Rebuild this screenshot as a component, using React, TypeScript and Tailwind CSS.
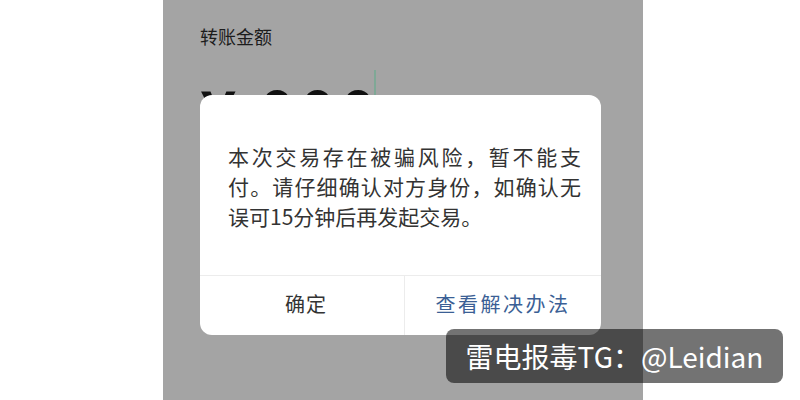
import React from 'react'

const cjk = { fontFamily: '"Noto Sans CJK SC", "Noto Sans", sans-serif' }

function RiskDialog() {
  return (
    <div className="absolute left-[37px] top-[95px] w-[401px] h-[240px] rounded-[12px] bg-white flex flex-col overflow-hidden">
      {/* Message */}
      <div className="flex-1 pl-[28px] pt-[46px]">
        <p className="w-[353px] text-justify text-[21px] leading-[30px] text-[#333333]">
          本次交易存在被骗风险，暂不能支付。请仔细确认对方身份，如确认无误可15分钟后再发起交易。
        </p>
      </div>

      {/* Actions */}
      <div className="h-[60px] flex border-t border-[#ececec]">
        <button className="w-[205px] h-full flex items-center justify-center pl-[8px] pb-[4px] text-[20px] tracking-[1px] text-[#333333] border-r border-[#ececec]">
          确定
        </button>
        <button className="flex-1 h-full flex items-center justify-center pb-[4px] text-[20px] tracking-[2.5px] text-[#3b5f95]">
          查看解决办法
        </button>
      </div>
    </div>
  )
}

export default function App() {
  return (
    <div className="relative w-[800px] h-[400px] bg-white overflow-hidden" style={cjk}>
      {/* Transfer page, dimmed under the modal */}
      <div className="relative ml-[163px] w-[480px] h-[400px] bg-[#a4a4a4]">
        <div className="pl-[37px] pt-[24px]">
          <div className="text-[18px] leading-[24px] text-[#1c1c1c]">转账金额</div>
          <div className="mt-[24px] flex items-start h-[80px]">
            <span className="text-[62px] leading-[74px] font-bold text-[#111111] tracking-[4px]">¥ 000</span>
            <span className="ml-[-6px] mt-[-2px] w-[2px] h-[36px] bg-[#7fa896]" />
          </div>
        </div>

        <RiskDialog />
      </div>

      {/* Watermark */}
      <div className="absolute left-[446px] top-[329px] w-[337px] h-[54px] rounded-[8px] bg-black/55 flex items-center justify-center">
        <span className="text-[28px] leading-none text-white">雷电报毒TG：@Leidian</span>
      </div>
    </div>
  )
}
